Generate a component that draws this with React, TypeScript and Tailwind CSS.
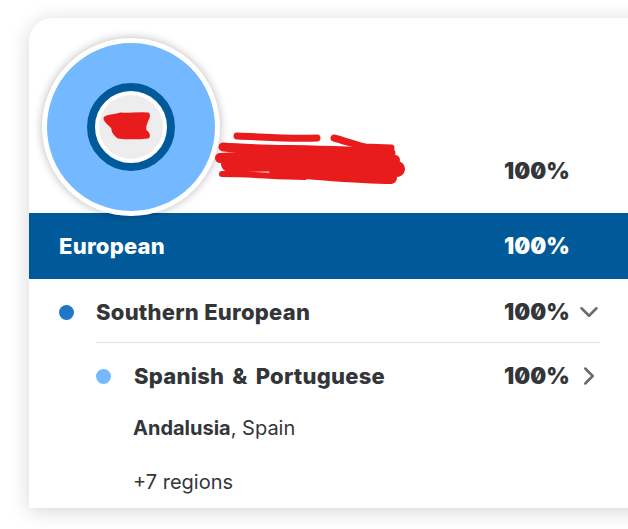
import React from 'react';
import { ChevronDown, ChevronRight } from 'lucide-react';

const pct = "w-[65px] font-black text-[22.5px] [font-feature-settings:'zero']";
const label = "font-extrabold text-[22px] tracking-[0.25px]";

const App: React.FC = () => {
  return (
    <div className="w-[628px] h-[529px] overflow-hidden bg-white font-['Inter',sans-serif] text-[#333639]">
      <div className="pt-[18px] pl-[29px]">
        <div className="w-[640px] h-[490px] bg-white rounded-tl-[24px] rounded-tr-[24px] shadow-[0_3px_20px_rgba(0,0,0,0.17)]">
          {/* header */}
          <div className="h-[195px] flex items-end relative z-10">
            <div className="ml-[13px] mb-[-3px] w-[178px] h-[178px] shrink-0 rounded-full bg-[#74b8ff] border-[5px] border-white shadow-[0_0_10px_rgba(0,0,0,0.28)] flex items-center justify-center">
              <div className="w-[88px] h-[88px] rounded-full border-[8px] border-[#005a9a] bg-white flex items-center justify-center">
                <div className="w-[64px] h-[64px] rounded-full bg-[#ededed] flex items-center justify-center">
                  <svg className="mr-[8px] mb-[5px]" width="50" height="30" viewBox="0 0 50 30">
                    <path d="M3 8 C8 5 14 6 19 4 C26 5 36 3 46 4 C48 7 44 10 44 13 C42 16 43 18 43 21 C46 23 47 25 46 27 C36 28 24 28 16 27 C13 24 10 22 11 18 C8 14 3 12 3 8 Z" fill="#e81c1c" stroke="#e81c1c" strokeWidth="3" strokeLinejoin="round" />
                  </svg>
                </div>
              </div>
            </div>
            <svg className="shrink-0 mb-[26px] ml-[-5px]" width="192" height="56" viewBox="0 0 192 56" fill="none" stroke="#e81c1c" strokeLinecap="round">
              <path d="M22 5 C50 6 70 8 102 7" strokeWidth="7" />
              <path d="M119 7 C130 10 138 13 150 16 L176 17" strokeWidth="7" />
              <path d="M8 16 C40 19 100 18 176 22" strokeWidth="9" />
              <path d="M5 27 C50 24 120 23 180 29" strokeWidth="10" />
              <path d="M14 33 C70 32 130 32 182 38" strokeWidth="16" />
              <path d="M7 43 C40 43 60 46 90 46" strokeWidth="6" />
              <path d="M60 40 C100 42 140 47 176 47" strokeWidth="12" />
            </svg>
            <span className={`${pct} absolute left-[475px] bottom-[25px]`}>100%</span>
          </div>

          {/* band */}
          <div className="h-[66px] bg-[#005a9a] text-white flex items-center pl-[30px]">
            <span className={`${label} w-[445px]`}>European</span>
            <span className={pct}>100%</span>
          </div>

          {/* southern */}
          <div className="pl-[30px]">
            <div className="h-[63px] pt-[3px] flex items-center">
              <span className="w-[15px] h-[15px] rounded-full bg-[#2077c7] mr-[22px]" />
              <span className={`${label} w-[408px]`}>Southern European</span>
              <span className={pct}>100%</span>
              <ChevronDown className="ml-[5px] w-[30px] h-[30px] text-[#6b6b6b]" strokeWidth={2} />
            </div>
            <div className="ml-[37px] w-[504px] h-[1px] bg-[#e3e3e3]" />
            <div className="ml-[37px]">
              <div className="h-[66px] flex items-center">
                <span className="w-[15px] h-[15px] rounded-full bg-[#74b8ff] mr-[23px]" />
                <span className={`${label} w-[370px] [word-spacing:3px]`}>Spanish &amp; Portuguese</span>
                <span className={pct}>100%</span>
                <ChevronRight className="ml-[5px] w-[30px] h-[30px] text-[#6b6b6b]" strokeWidth={2} />
              </div>
              <div className="pl-[37px] text-[20px] leading-[24px]">
                <div className="mt-[7px]"><span className="font-bold">Andalusia</span>, Spain</div>
                <div className="mt-[30px]">+7 regions</div>
              </div>
            </div>
          </div>
        </div>
      </div>
    </div>
  );
};

export default App;
